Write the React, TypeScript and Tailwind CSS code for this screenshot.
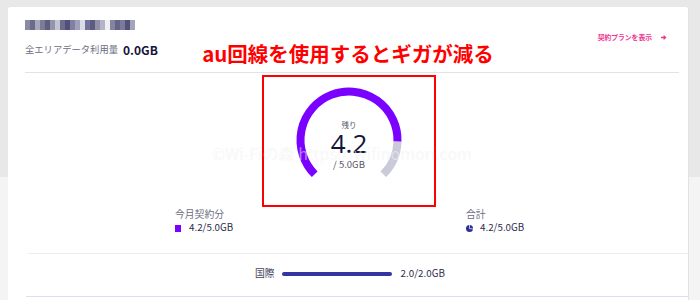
import React from 'react';

const mosaic = [
  '#8a8aa2', '#6c6c88', '#a8a8bc', '#7c7c98', '#5e5e80', '#9494ac', '#c4c4d4', '#6c6c8c',
  '#50507a', '#8080a0', '#a0a0b8', '#dcdce6', '#72729a', '#5c5c82', '#9090aa', '#b4b4c8',
  '#f0f0f4', '#8484a2', '#646486', '#7a7a9a', '#525278', '#a4a4bc',
];

function Gauge() {
  // 270° gauge, 84% filled (4.2 / 5.0)
  return (
    <svg width="110" height="96" viewBox="0 0 110 96">
      <path
        d="M 20.71 89.29 A 48.5 48.5 0 1 1 103.48 56.52"
        fill="none"
        stroke="#7a00ff"
        strokeWidth="8"
      />
      <path
        d="M 103.48 56.52 A 48.5 48.5 0 0 1 89.29 89.29"
        fill="none"
        stroke="#cbcadb"
        strokeWidth="8"
      />
    </svg>
  );
}

function PieIcon() {
  return (
    <svg width="7" height="7" viewBox="0 0 8 8">
      <circle cx="4" cy="4" r="4" fill="#2f2f9c" />
      <path d="M4 4 L4 0 M4 4 L8 4.5" stroke="#ffffff" strokeWidth="0.8" />
    </svg>
  );
}

export default function App() {
  return (
    <div
      className="w-[700px] h-[300px] overflow-hidden pt-[7px] pl-[8px] bg-[linear-gradient(to_bottom,#e8e8e8_177px,#f4f4f4_177px)]"
      style={{ fontFamily: '"Noto Sans CJK JP", "Noto Sans", sans-serif' }}
    >
      <div className="relative w-[681px] h-[300px] bg-white rounded-t-[3px] border-r border-[#e2e2e2]">
        {/* header */}
        <div className="flex justify-between pl-[17px] pr-[21px] pt-[13px]">
          <div>
            <div className="flex h-[10px]">
              {mosaic.map((c, i) => (
                <div key={i} className="w-[5px] h-[10px]" style={{ backgroundColor: c }} />
              ))}
            </div>
            <div className="mt-[14px] flex items-center h-[12px]">
              <span className="text-[9.3px] text-[#6c6c80] leading-none">全エリアデータ利用量</span>
              <span className="ml-[5px] text-[12px] font-bold text-[#15153a] leading-none">0.0GB</span>
            </div>
          </div>
          <div className="pt-[12px] flex items-start">
            <span className="text-[6.8px] font-bold text-[#f0368f] leading-[10px]">契約プランを表示</span>
            <svg className="ml-[9px] mt-[3px]" width="6" height="5" viewBox="0 0 6 5">
              <path d="M0 2.5 H4.2 M2.6 0.6 L4.6 2.5 L2.6 4.4" stroke="#f0368f" strokeWidth="1.3" fill="none" />
            </svg>
          </div>
        </div>

        {/* annotation title */}
        <div className="absolute left-0 right-0 top-[33px] text-center text-[20.5px] font-bold text-[#ff0000] leading-[26px]">
          au回線を使用するとギガが減る
        </div>

        <div className="mt-[16px] ml-[17px] mr-[9px] h-px bg-[#e2e2ea]" />

        {/* gauge in red box */}
        <div className="mt-[2px] w-[174px] h-[132px] border-2 border-[#ff0000] ml-[254px]">
          <div className="relative mx-auto mt-[8px] w-[110px] h-[96px]">
            <Gauge />
            <div className="absolute inset-0 flex flex-col items-center pt-[35px]">
              <span className="text-[7.5px] text-[#55556a] leading-[10px]">残り</span>
              <span className="text-[26px] text-[#14143a] leading-[24px] mt-[1px]" style={{ fontFamily: '"Open Sans", "Noto Sans", sans-serif' }}>4.2</span>
              <span className="text-[9.5px] text-[#55556a] leading-[12px] mt-[3px]">/ 5.0GB</span>
            </div>
          </div>
        </div>

        {/* watermark */}
        <div
          className="absolute left-[204px] top-[134px] text-[16px] text-white/50 whitespace-nowrap [text-shadow:0_0_1px_rgba(0,0,0,0.06)]"
          style={{ fontFamily: '"Noto Sans CJK JP", sans-serif' }}
        >
          ©Wi-Fiの森 https://wifinomori.com
        </div>

        {/* breakdown */}
        <div className="flex pl-[167px]">
          <div className="w-[291px]">
            <div className="text-[9.8px] text-[#6c6c80] leading-[14px]">今月契約分</div>
            <div className="flex items-center h-[14px]">
              <div className="w-[6px] h-[7px] bg-[#7a00ff]" />
              <span className="ml-[8px] text-[9.8px] text-[#2e2e4c] leading-none">4.2/5.0GB</span>
            </div>
          </div>
          <div>
            <div className="text-[9.8px] text-[#6c6c80] leading-[14px]">合計</div>
            <div className="flex items-center h-[14px]">
              <PieIcon />
              <span className="ml-[7px] text-[9.8px] text-[#2e2e4c] leading-none">4.2/5.0GB</span>
            </div>
          </div>
        </div>

        <div className="mt-[18px] ml-[20px] h-px bg-[#ececf2]" />

        <div className="mt-[13px] flex items-center h-[14px] pl-[247px]">
          <span className="text-[9.8px] text-[#44445a] leading-none">国際</span>
          <div className="ml-[7px] w-[110px] h-[4px] rounded-full bg-[#3434a2]" />
          <span className="ml-[9px] text-[9.8px] text-[#2e2e4c] leading-none">2.0/2.0GB</span>
        </div>

        <div className="mt-[15px] ml-[18px] h-px bg-[#dedeec]" />
      </div>
    </div>
  );
}
